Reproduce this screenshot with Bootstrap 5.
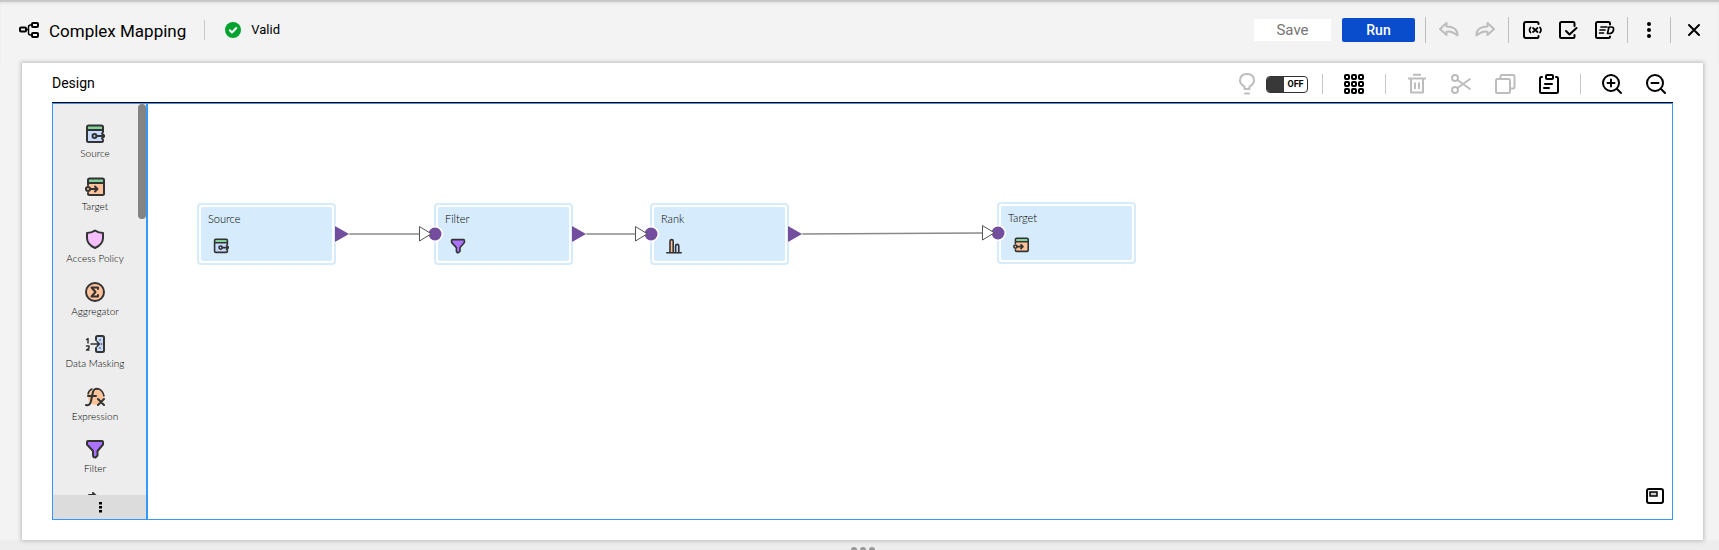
<!DOCTYPE html>
<html lang="en">
<head>
<meta charset="utf-8">
<meta name="viewport" content="width=device-width, initial-scale=1">
<title>Complex Mapping</title>
<link href="https://cdn.jsdelivr.net/npm/bootstrap@5.3.0/dist/css/bootstrap.min.css" rel="stylesheet">
<script src="https://cdn.jsdelivr.net/npm/bootstrap@5.3.0/dist/js/bootstrap.bundle.min.js"></script>
<style>
  body { font-family: Roboto, "Liberation Sans", sans-serif; background: #f3f3f3; color: #000; }
  button { font-family: inherit; }
  svg { display: block; fill: none; stroke: currentColor; stroke-width: 2; stroke-linecap: round; stroke-linejoin: round; }
  .topbar { height: 63px; padding: 0 14px 6px 18px; border-top: 2px solid #c8c8c8; box-shadow: inset 0 2px 2px #e4e4e4; }
  .topbar h1 { font-size: 17px; line-height: 24px; font-weight: 400; padding: 2px 18px 0 9px; }
  .rule-v { width: 1px; height: 26px; background: #bdbdbd; }
  .rule-v.short { height: 20px; background: #c8c8c8; }
  .gap-bar { gap: 12px; }
  .gap-actions { gap: 11px; margin-right: -2px; }
  .gap-tools { gap: 14px; }
  .gap-design { gap: 22px; padding: 0 6px; }
  .tool { width: 22px; height: 22px; padding: 0; border: 0; background: none; color: #000; display: flex; align-items: center; justify-content: center; }
  .tool:disabled { color: #bdbdbd; }
  .tool.narrow { width: 18px; }
  .btn-save { width: 77px; height: 22px; padding: 0; border: 0; border-radius: 0; background: #fff; color: #757575; font-size: 15px; line-height: 22px; }
  .btn-run { width: 73px; height: 24px; padding: 0; border: 0; border-radius: 2px; background: #0a4dcc; color: #fff; font-size: 14px; line-height: 24px; font-weight: 500; }
  .btn-save:disabled { opacity: 1; background: #fff; color: #757575; }
  .status { font-size: 13px; line-height: 20px; gap: 10px; padding-left: 20px; }
  .panel { margin: 0 16px 0 22px; padding: 0 30px 20px; background: #fff; box-shadow: 0 0 4px 1px #bbb; }
  .panel-head { height: 40px; border-bottom: 1px solid #000; }
  .panel-head h2 { font-size: 14px; line-height: 20px; font-weight: 400; }
  .design-tools { padding-top: 3px; }
  .switch-box { width: 42px; height: 17px; border: 1px solid #333; border-radius: 4px; overflow: hidden; font-size: 9px; line-height: 15px; font-weight: 700; background: #fff; }
  .switch-box input { appearance: none; width: 17px; height: 15px; margin: 0; background: #383838; }
  .board { border: 1px solid #3399ff; }
  .palette { width: 95px; border-right: 2px solid #3399ff; background: #ededed; font-family: Lato, "Liberation Sans", sans-serif; }
  .items { flex: 1 1 0; overflow: hidden; padding-top: 20px; }
  .items ul { height: 420px; width: 84px; }
  .items li { flex: 1 1 0; }
  .items button { border: 0; padding: 0; background: none; width: 84px; font-size: 10px; line-height: 14px; font-weight: 300; color: #000; display: flex; flex-direction: column; align-items: center; gap: 2px; }
  .thumb { top: 0; right: 0; width: 8px; height: 115px; border-radius: 4px; background: #838383; }
  .palette-more { height: 24px; border: 0; padding: 0 0 0 2px; background: #dcdcdc; }
  .node { width: 139px; height: 62px; padding: 2px; border: 2px solid #d6ebfc; border-radius: 4px; background: #fff; font-family: Lato, "Liberation Sans", sans-serif; }
  .node > div { height: 54px; padding: 5px 7px; border-radius: 2px; background: #d6ebfc; font-size: 11px; line-height: 14px; font-weight: 300; }
  .node svg { margin: 12px 0 0 5px; }
  .minimap { right: 6px; bottom: 12px; }
  .grip { height: 10px; background: #ededed; overflow: hidden; gap: 3px; padding: 7px 0 0 7px; }
  .grip i { width: 6px; height: 6px; border-radius: 3px; background: #999; }
</style>
</head>
<body class="vh-100 d-flex flex-column overflow-hidden">

<svg width="0" height="0" class="position-absolute" aria-hidden="true">
  <defs>
    <symbol id="i-source" viewBox="0 0 20 20"><rect x="2" y="2" width="16" height="16" rx="1.5" fill="#c6dbff" stroke="none"/><path d="M2 2h16v4H2z" fill="#83d39a" stroke="none"/><path d="M18 8V3q0-1.500-1.500-1.500h-13Q2 1.500 2 3v13.500Q2 18 3.500 18h13q1.500 0 1.500-1.500V16M2 6h16M11.500 12H19M17 9.500l2.500 2.500-2.500 2.500"/><circle cx="9.500" cy="12" r="2"/></symbol>
    <symbol id="i-target" viewBox="0 0 20 20"><rect x="3" y="2" width="16" height="16" rx="1.500" fill="#ffc39c" stroke="none"/><path d="M3 2h16v4H3z" fill="#83d39a" stroke="none"/><path d="M3 8V3q0-1.500 1.500-1.500h13Q19 1.500 19 3v13.500q0 1.500-1.500 1.500h-13Q3 18 3 16.500V16M3 6h16M5 12h7M10 9.500l2.500 2.500-2.500 2.500"/><circle cx="3" cy="12" r="2" fill="#ffc39c"/></symbol>
    <symbol id="i-filter" viewBox="0 0 20 20"><path d="M3 2h14q1 0 1 1v2.500L12.500 12v4.500L10.500 18.500Q8 18.500 8 16v-4L2 5.500V3q0-1 1-1z" fill="#ad73ff"/></symbol>
    <symbol id="i-rank" viewBox="0 0 20 20"><path d="M5 18V4q0-2 2-2t2 2v14" fill="#ffc39c"/><path d="M12 18v-8q0-2 2-2t2 2v8" fill="#c6dbff"/><path d="M1 18.500h18"/></symbol>
  </defs>
</svg>

<header class="topbar d-flex align-items-center justify-content-between flex-shrink-0">
  <div class="d-flex align-items-center">
    <svg width="22" height="20" viewBox="0 0 22 20" aria-hidden="true"><rect x="2" y="7.500" width="6" height="4" rx="1"/><rect x="14" y="3" width="6" height="4" rx="1"/><rect x="14" y="13" width="6" height="4" rx="1"/><path d="M8 9.500h2.500M14 5h-1.500q-2 0-2 2v6q0 2 2 2H14" stroke-width="1.500"/></svg>
    <h1 class="mb-0">Complex Mapping</h1>
    <div class="rule-v short"></div>
    <div class="status d-flex align-items-center">
      <svg width="16" height="16" viewBox="0 0 16 16" aria-hidden="true"><circle cx="8" cy="8" r="8" fill="#00a32e" stroke="none"/><path d="M4.800 8.300L7 10.500 11.300 6" stroke="#fff"/></svg>
      <span>Valid</span>
    </div>
  </div>
  <div class="d-flex align-items-center gap-bar">
    <div class="d-flex align-items-center gap-actions">
      <button class="btn btn-save" type="button" disabled>Save</button>
      <button class="btn btn-run" type="button">Run</button>
    </div>
    <div class="rule-v"></div>
    <div class="d-flex gap-tools">
      <button class="tool" type="button" disabled aria-label="Undo"><svg width="22" height="22" viewBox="0 0 22 22"><path d="M8.500 4L2 10l6.500 6v-3q2-1 5 0t6 3.500Q20 8 8.500 7.500z"/></svg></button>
      <button class="tool" type="button" disabled aria-label="Redo"><svg width="22" height="22" viewBox="0 0 22 22"><path d="M13.500 4L20 10l-6.500 6v-3q-2-1-5 0t-6 3.500Q2 8 13.500 7.500z"/></svg></button>
    </div>
    <div class="rule-v"></div>
    <div class="d-flex gap-tools">
      <button class="tool" type="button" aria-label="Parameters"><svg width="22" height="22" viewBox="0 0 22 22"><path d="M17.500 5V4.500q0-1.500-1.500-1.500H5Q3 3 3 5v12q0 2 2 2h11q1.500 0 1.500-1.500V17"/><path d="M9.500 8.500q-2 2.500 0 5M19 8.500q2 2.500 0 5M12 9l4.500 4M16.500 9L12 13" stroke-width="1.700"/></svg></button>
      <button class="tool" type="button" aria-label="Validate"><svg width="22" height="22" viewBox="0 0 22 22"><path d="M17.500 7V4.500q0-1.500-1.500-1.500H4.500Q3 3 3 4.500v13Q3 19 4.500 19H16q1.500 0 1.500-1.500V16M9 12l3.500 3.500L19.500 9"/></svg></button>
      <button class="tool" type="button" aria-label="Data preview"><svg width="22" height="22" viewBox="0 0 22 22"><path d="M17 5.500V4.500Q17 3 15.500 3h-11Q3 3 3 4.500v13Q3 19 4.500 19h11q1.500 0 1.500-1.500"/><path d="M8 8h6M7 11h5M6.500 14h4M16 8h2.500q2.500 0 2 3t-3.500 3.500h-2.500z" stroke-width="1.700"/></svg></button>
    </div>
    <div class="rule-v"></div>
    <button class="tool narrow" type="button" aria-label="More actions"><svg width="6" height="20" viewBox="0 0 6 20"><g fill="#000" stroke="none"><circle cx="3" cy="4" r="2"/><circle cx="3" cy="10" r="2"/><circle cx="3" cy="16" r="2"/></g></svg></button>
    <div class="rule-v"></div>
    <button class="tool" type="button" aria-label="Close"><svg width="22" height="22" viewBox="0 0 22 22"><path d="M6 6l10 10M16 6L6 16"/></svg></button>
  </div>
</header>

<main class="panel flex-fill d-flex flex-column position-relative">
  <div class="panel-head d-flex align-items-center justify-content-between">
    <h2 class="mb-0">Design</h2>
    <div class="design-tools d-flex align-items-center gap-tools">
      <div class="d-flex align-items-center gap-2">
        <button class="tool" type="button" disabled aria-label="Recommendations"><svg width="22" height="24" viewBox="0 0 22 24"><path d="M8.500 17v-2.500Q4 12 4 8.500 4 2 11 2t7 6.500q0 3.500-4.500 6V17zM9 21.500h4"/></svg></button>
        <label class="switch-box d-flex"><input type="checkbox" role="switch"><span class="flex-fill text-center">OFF</span></label>
      </div>
      <div class="rule-v short"></div>
      <div class="d-flex gap-design">
        <button class="tool" type="button" aria-label="Arrange all"><svg width="22" height="22" viewBox="0 0 22 22"><g id="g"><rect x="2" y="2" width="4" height="4" rx="1"/><rect x="9" y="2" width="4" height="4" rx="1"/><rect x="16" y="2" width="4" height="4" rx="1"/></g><use href="#g" y="7"/><use href="#g" y="14"/></svg></button>
      </div>
      <div class="rule-v short"></div>
      <div class="d-flex gap-design">
        <button class="tool" type="button" disabled aria-label="Delete"><svg width="22" height="22" viewBox="0 0 22 22"><path d="M2 5.500h18M7 1.800h8M5 6v13.500h12V6M9 9.500v6.500M13 9.500v6.500" stroke-linecap="butt"/></svg></button>
        <button class="tool" type="button" disabled aria-label="Cut"><svg width="22" height="22" viewBox="0 0 22 22"><circle cx="5" cy="5" r="3"/><circle cx="5" cy="17" r="3"/><path d="M7.500 7l12.500 9M7.500 15L20 6"/></svg></button>
        <button class="tool" type="button" disabled aria-label="Copy"><svg width="22" height="22" viewBox="0 0 22 22"><rect x="2" y="6" width="14" height="14" rx="1.500"/><path d="M6.500 5V3.500Q6.500 2 8 2h11q1.500 0 1.500 1.500V14q0 1.500-1.500 1.500h-2"/></svg></button>
        <button class="tool" type="button" aria-label="Paste"><svg width="22" height="22" viewBox="0 0 22 22"><path d="M4 4H3.500Q2 4 2 5.500v13Q2 20 3.500 20h15q1.500 0 1.500-1.500v-13Q20 4 18.500 4H18M7 11h7M6 15h5"/><rect x="8" y="2" width="7" height="4" rx="1"/></svg></button>
      </div>
      <div class="rule-v short"></div>
      <div class="d-flex gap-design">
        <button class="tool" type="button" aria-label="Zoom in"><svg width="22" height="22" viewBox="0 0 22 22"><circle cx="10" cy="10" r="8"/><path d="M16 16l4 4M6.500 10h7M10 6.500v7"/></svg></button>
        <button class="tool" type="button" aria-label="Zoom out"><svg width="22" height="22" viewBox="0 0 22 22"><circle cx="10" cy="10" r="8"/><path d="M16 16l4 4M6.500 10h7"/></svg></button>
      </div>
    </div>
  </div>

  <div class="board flex-fill d-flex">
    <nav class="palette position-relative d-flex flex-column flex-shrink-0" aria-label="Transformations">
      <div class="items">
        <ul class="list-unstyled mb-0 d-flex flex-column">
          <li><button type="button"><svg width="20" height="20" color="#333"><use href="#i-source"/></svg>Source</button></li>
          <li><button type="button"><svg width="20" height="20" color="#333"><use href="#i-target"/></svg>Target</button></li>
          <li><button type="button"><svg width="20" height="20" viewBox="0 0 20 20" color="#333"><path d="M10 1.500q3.500 2.500 8 2.500v5q0 6.500-8 10-8-3.500-8-10V4q4.500 0 8-2.500z" fill="#f5bfff"/></svg>Access Policy</button></li>
          <li><button type="button"><svg width="20" height="20" viewBox="0 0 20 20" color="#333"><circle cx="10" cy="10" r="9" fill="#ffc39c"/><path d="M13 7V5.500H6.500L10.500 10l-4 4.500H13V13"/></svg>Aggregator</button></li>
          <li><button type="button"><svg width="20" height="20" viewBox="0 0 20 20" color="#333"><path d="M11 6V3.500Q11 2 12.500 2h5Q19 2 19 3.500v13q0 1.500-1.500 1.500h-5Q11 18 11 16.500V14" fill="#c6dbff"/><path d="M6 10h8M12 7.500l2.500 2.500-2.500 2.500M1.500 5.500L3 4.500V9M1.500 12H4v2l-2.500 2H4" stroke-width="1.500"/><path d="M15 6h.1M16.500 10h.1M15 14h.1" stroke-width="1.500"/></svg>Data Masking</button></li>
          <li><button type="button"><svg width="20" height="20" viewBox="0 0 20 20" color="#333"><circle cx="11" cy="10" r="8" fill="#ffc39c" stroke="none"/><path d="M1 18q4 1 5-4l2-9q1-4 5-3M3 9h8M13 12l6 6M19 12l-6 6"/><path d="M14 2q4 2 5 7M3 7q1-4 4-5" stroke-width="1.500"/></svg>Expression</button></li>
          <li><button type="button"><svg width="20" height="20" color="#333"><use href="#i-filter"/></svg>Filter</button></li>
          <li><button type="button" aria-label="Hierarchy"><svg width="20" height="20" viewBox="0 0 20 20" color="#333"><path d="M4 3h6M8 1l3 3-3 3"/></svg></button></li>
        </ul>
      </div>
      <div class="thumb position-absolute"></div>
      <button class="palette-more d-flex align-items-center justify-content-center" type="button" aria-label="More transformations"><svg width="3" height="11" viewBox="0 0 3 11"><path d="M0 0h3v2.500H0zM0 4h3v2.500H0zM0 8h3v2.500H0z" fill="#000" stroke="none"/></svg></button>
    </nav>

    <!-- Free canvas: nodes sit at their saved coordinates -->
    <section class="flex-fill position-relative" aria-label="Mapping canvas">
      <div class="node position-absolute" style="left:49px;top:99px"><div>Source<svg width="16" height="16" color="#333"><use href="#i-source"/></svg></div></div>
      <div class="node position-absolute" style="left:286px;top:99px"><div>Filter<svg width="16" height="16" color="#333"><use href="#i-filter"/></svg></div></div>
      <div class="node position-absolute" style="left:502px;top:99px"><div>Rank<svg width="16" height="16" color="#333"><use href="#i-rank"/></svg></div></div>
      <div class="node position-absolute" style="left:849px;top:98px"><div>Target<svg width="16" height="16" color="#333"><use href="#i-target"/></svg></div></div>
      <svg class="position-absolute top-0 start-0 w-100 h-100" aria-hidden="true">
        <defs>
          <g id="out"><path d="M0-9.500L15 0 0 9.500z" fill="#fff" stroke="none"/><path d="M0-8L14 0 0 8z" fill="#734e9e" stroke="none"/></g>
          <g id="in"><circle r="8" fill="#fff" stroke="none"/><circle r="6.500" fill="#734e9e" stroke="none"/><path d="M-15.500-7V7L-4 0z" fill="#fff" stroke="#555" stroke-width="1"/></g>
        </defs>
        <g stroke="#8a8a8a" stroke-width="1.500"><path d="M199 130h72M436 130h51M651 130l183-1"/></g>
        <use href="#out" x="187" y="130"/><use href="#out" x="424" y="130"/><use href="#out" x="640" y="130"/>
        <use href="#in" x="287" y="130"/><use href="#in" x="503" y="130"/><use href="#in" x="850" y="129"/>
      </svg>
      <button class="tool minimap position-absolute" type="button" aria-label="Overview"><svg width="20" height="18" viewBox="0 0 20 18"><rect x="2" y="2" width="16" height="14" rx="2"/><rect x="5" y="5" width="7" height="4" fill="#ccc" stroke-width="1.500" stroke-linejoin="miter"/></svg></button>
    </section>
  </div>
</main>
<div class="grip d-flex justify-content-center flex-shrink-0"><i></i><i></i><i></i></div>
</body>
</html>
